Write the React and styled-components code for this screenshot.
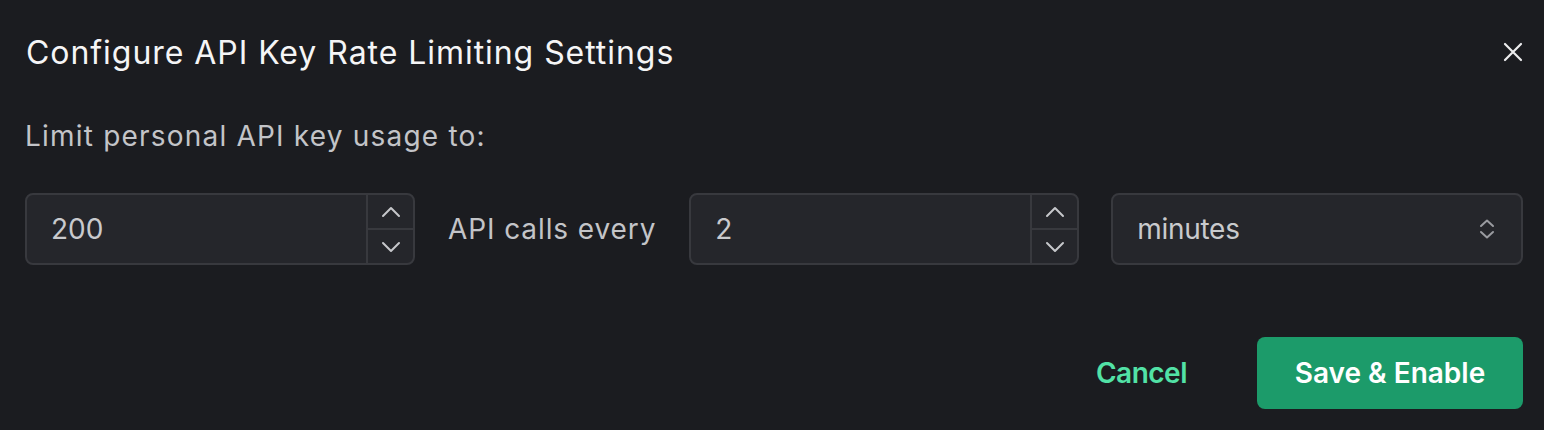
import React from "react";
import styled, { createGlobalStyle } from "styled-components";

const Global = createGlobalStyle`
  html, body { margin: 0; padding: 0; background: #1b1c20; }
  body { font-family: Inter, "Noto Sans", sans-serif; -webkit-font-smoothing: antialiased; }
  * { box-sizing: border-box; }
`;

const Dialog = styled.div`
  width: 1544px;
  height: 430px;
  background: #1b1c20;
  padding: 0 21px 21px 25px;
  display: flex;
  flex-direction: column;
`;

const Header = styled.div`
  height: 104px;
  display: flex;
  align-items: center;
  justify-content: space-between;
`;

const Title = styled.h2`
  margin: 0 0 0 1px;
  font-size: 32px;
  font-weight: 400;
  color: #f5f5f6;
  letter-spacing: 0.95px;
`;

const CloseButton = styled.button`
  width: 40px;
  height: 40px;
  margin-right: -10px;
  border: none;
  background: transparent;
  display: flex;
  align-items: center;
  justify-content: center;
  padding: 0;
  cursor: pointer;
`;

const Label = styled.p`
  margin: 16px 0 0 0;
  font-size: 28px;
  line-height: 32px;
  color: #c3c4c8;
  letter-spacing: 1.2px;
`;

const Row = styled.div`
  margin-top: 41px;
  display: flex;
  align-items: center;
  height: 72px;
`;

const NumberBox = styled.div`
  width: 390px;
  height: 72px;
  display: flex;
  background: #25262b;
  border: 2px solid #38393e;
  border-radius: 8px;
  overflow: hidden;
`;

const NumberValue = styled.div`
  flex: 1;
  display: flex;
  align-items: center;
  padding-left: 24px;
  font-size: 28px;
  color: #c9cacd;
`;

const Spinner = styled.div`
  width: 47px;
  display: flex;
  flex-direction: column;
  border-left: 2px solid #38393e;
`;

const SpinButton = styled.div`
  flex: 1;
  display: flex;
  align-items: center;
  justify-content: center;
  & + & { border-top: 2px solid #38393e; }
`;

const Between = styled.span`
  margin: 0 33px;
  font-size: 28px;
  color: #c3c4c8;
  letter-spacing: 0.9px;
`;

const Select = styled.div`
  flex: 1;
  margin-left: 32px;
  height: 72px;
  display: flex;
  align-items: center;
  justify-content: space-between;
  background: #25262b;
  border: 2px solid #38393e;
  border-radius: 8px;
  padding: 0 26px 0 24px;
  font-size: 28px;
  letter-spacing: -0.3px;
  color: #c9cacd;
`;

const Footer = styled.div`
  margin-top: auto;
  display: flex;
  justify-content: flex-end;
  align-items: center;
  gap: 36px;
`;

const TextButton = styled.button`
  border: none;
  background: transparent;
  font-family: inherit;
  font-size: 28px;
  font-weight: 600;
  letter-spacing: -0.5px;
  color: #52e2a6;
  padding: 0 34px;
  height: 72px;
`;

const PrimaryButton = styled.button`
  border: none;
  background: #1c9b6a;
  border-radius: 8px;
  height: 72px;
  width: 266px;
  font-family: inherit;
  font-size: 28px;
  font-weight: 600;
  color: #ffffff;
`;

const Chevron = ({ up }) => (
  <svg width="20" height="12" viewBox="0 0 20 12" fill="none">
    <path
      d={up ? "M2 10 L10 2 L18 10" : "M2 2 L10 10 L18 2"}
      stroke="#c6c7cb"
      strokeWidth="2"
      strokeLinecap="round"
      strokeLinejoin="round"
    />
  </svg>
);

const NumberInput = ({ value }) => (
  <NumberBox>
    <NumberValue>{value}</NumberValue>
    <Spinner>
      <SpinButton><Chevron up /></SpinButton>
      <SpinButton><Chevron /></SpinButton>
    </Spinner>
  </NumberBox>
);

export default function App() {
  return (
    <>
      <Global />
      <Dialog>
        <Header>
          <Title>Configure API Key Rate Limiting Settings</Title>
          <CloseButton aria-label="Close">
            <svg width="20" height="20" viewBox="0 0 20 20">
              <path d="M2 2 L18 18 M18 2 L2 18" stroke="#ececee" strokeWidth="2.2" strokeLinecap="round" />
            </svg>
          </CloseButton>
        </Header>
        <Label>Limit personal API key usage to:</Label>
        <Row>
          <NumberInput value="200" />
          <Between>API calls every</Between>
          <NumberInput value="2" />
          <Select>
            <span>minutes</span>
            <svg width="16" height="24" viewBox="0 0 16 24" fill="none">
              <path d="M2 9 L8 3.5 L14 9 M2 15 L8 20.5 L14 15" stroke="#9a9ba0" strokeWidth="2" strokeLinecap="round" strokeLinejoin="round" />
            </svg>
          </Select>
        </Row>
        <Footer>
          <TextButton>Cancel</TextButton>
          <PrimaryButton>Save &amp; Enable</PrimaryButton>
        </Footer>
      </Dialog>
    </>
  );
}
